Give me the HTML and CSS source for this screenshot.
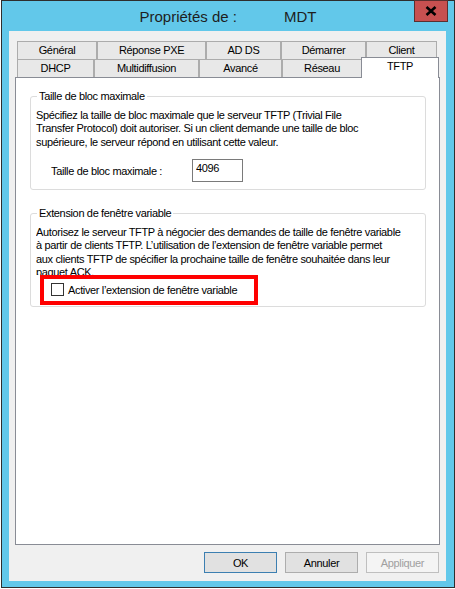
FILE: index.html
```html
<!DOCTYPE html>
<html lang="fr">
<head>
    <meta charset="UTF-8">
    <title>Propriétés de : MDT</title>
    <link rel="stylesheet" href="styles.css">
</head>
<body>
    <div class="window">
        <div class="titlebar">
            <span class="title">Propriétés de :<span class="title-name">MDT</span></span>
            <button class="close-btn" aria-label="Fermer">
                <svg width="12" height="10" viewBox="0 0 12 10"><path d="M1.5 1 L10.5 9 M10.5 1 L1.5 9" stroke="#000" stroke-width="2.6" fill="none"/></svg>
            </button>
        </div>

        <div class="client">
            <div class="tabs">
                <div class="tab-row row-top">
                    <div class="tab">Général</div>
                    <div class="tab">Réponse PXE</div>
                    <div class="tab">AD DS</div>
                    <div class="tab">Démarrer</div>
                    <div class="tab">Client</div>
                </div>
                <div class="tab-row row-bottom">
                    <div class="tab">DHCP</div>
                    <div class="tab">Multidiffusion</div>
                    <div class="tab">Avancé</div>
                    <div class="tab">Réseau</div>
                    <div class="tab active">TFTP</div>
                </div>
            </div>

            <div class="tab-panel">
                <fieldset class="group group-block">
                    <legend>Taille de bloc maximale</legend>
                    <p class="group-text">Spécifiez la taille de bloc maximale que le serveur TFTP (Trivial File<br>Transfer Protocol) doit autoriser. Si un client demande une taille de bloc<br>supérieure, le serveur répond en utilisant cette valeur.</p>
                    <div class="field-row">
                        <label for="block-size">Taille de bloc maximale :</label>
                        <input id="block-size" type="text" value="4096">
                    </div>
                </fieldset>

                <fieldset class="group group-window">
                    <legend>Extension de fenêtre variable</legend>
                    <p class="group-text clipped">Autorisez le serveur TFTP à négocier des demandes de taille de fenêtre variable<br>à partir de clients TFTP. L’utilisation de l’extension de fenêtre variable permet<br>aux clients TFTP de spécifier la prochaine taille de fenêtre souhaitée dans leur<br>paquet ACK.</p>
                    <label class="check-row">
                        <span class="check-box"></span>
                        Activer l’extension de fenêtre variable
                    </label>
                </fieldset>
            </div>

            <div class="buttons">
                <button class="btn default">OK</button>
                <button class="btn">Annuler</button>
                <button class="btn" disabled>Appliquer</button>
            </div>
        </div>
    </div>
</body>
</html>
```

FILE: styles.css
```css
* {
    box-sizing: border-box;
}
body {
    margin: 0;
    background: #fff;
    font-family: "Liberation Sans", Arial, sans-serif;
    font-size: 11px;
    letter-spacing: -0.35px;
    color: #000;
}
.window {
    position: relative;
    margin-left: 1px;
    width: 454px;
    height: 588px;
    border: 1px solid #2e2e2e;
    background: #62c8ea;
}
.titlebar {
    height: 30px;
    display: flex;
    justify-content: center;
    align-items: center;
}
.title {
    font-size: 15px;
    letter-spacing: 0;
    color: #1e1e1e;
}
.title-name {
    margin-left: 47px;
}
.close-btn {
    position: absolute;
    top: -1px;
    right: 6px;
    width: 34px;
    height: 22px;
    padding: 0;
    background: #c75050;
    border: 1px solid #5b2f2f;
    display: flex;
    align-items: center;
    justify-content: center;
}
.client {
    margin: 0 8px 6px 7px;
    height: 550px;
    background: #f0f0f0;
    padding-top: 10px;
}
.tabs {
    margin-left: 8px;
    width: 420px;
}
.tab-row {
    display: grid;
    height: 18px;
}
.row-top {
    grid-template-columns: 80px 109px 75px 85px 71px;
}
.row-bottom {
    grid-template-columns: 77px 105px 83px 80px 75px;
}
.tab {
    border: 1px solid #acacac;
    border-bottom: none;
    background: #e8e8e8;
    text-align: center;
    line-height: 17px;
    white-space: nowrap;
}
.tab.active {
    margin: -2px -2px -1px -1px;
    z-index: 1;
    background: #fff;
    border-color: #898c95;
}
.tab-panel {
    margin-left: 6px;
    width: 425px;
    height: 468px;
    border: 1px solid #898c95;
    background: #fff;
    padding: 12px 13px 0 14px;
}
.group {
    margin: 0;
    padding: 0 6px 0 5px;
    border: 1px solid #dcdcdc;
    border-radius: 3px;
    min-width: 0;
}
.group legend {
    padding: 0 2px;
    margin-left: 1px;
    line-height: 13.5px;
}
.group-block {
    padding-bottom: 7px;
}
.group-window {
    margin-top: 17px;
    padding-bottom: 1px;
}
.group-text {
    margin: 5px 0 0;
    line-height: 13.5px;
    white-space: nowrap;
}
.group-text.clipped {
    height: 49px;
    overflow: hidden;
}
.field-row {
    display: grid;
    grid-template-columns: 141px 51px;
    align-items: center;
    margin-top: 10px;
    padding-left: 15px;
}
.field-row input {
    width: 51px;
    height: 23px;
    border: 1px solid #7a7a7a;
    padding: 0 3px 6px;
    font: inherit;
    letter-spacing: inherit;
    color: #000;
}
.check-row {
    display: flex;
    align-items: center;
    gap: 4px;
    width: 218px;
    height: 30px;
    margin-left: 4px;
    padding-left: 7px;
    border: 4px solid #f00;
}
.check-box {
    width: 13px;
    height: 13px;
    border: 1px solid #333;
    background: #fff;
}
.buttons {
    display: flex;
    justify-content: flex-end;
    gap: 8px;
    margin-top: 7px;
    padding-right: 7px;
}
.btn {
    width: 73px;
    height: 21px;
    padding: 0;
    border: 1px solid #adadad;
    background: #e1e1e1;
    font: inherit;
    letter-spacing: inherit;
    color: #000;
}
.btn.default {
    border-color: #3c7fb1;
}
.btn:disabled {
    border-color: #bfbfbf;
    background: #f4f4f4;
    color: #a0a0a0;
}
```
